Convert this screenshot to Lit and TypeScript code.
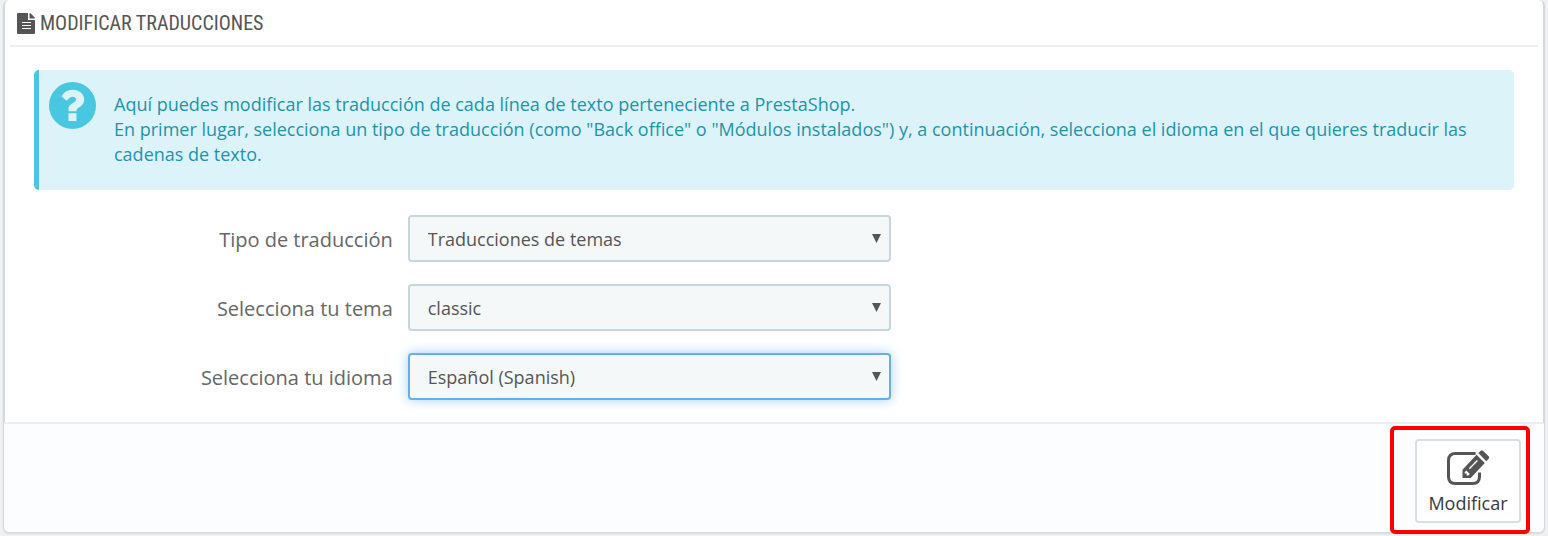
import { LitElement, html, css } from "lit";
import { customElement, state } from "lit/decorators.js";

interface Field {
  id: string;
  label: string;
  options: string[];
}

const FIELDS: Field[] = [
  { id: "type", label: "Tipo de traducción", options: ["Traducciones de temas", "Back office", "Módulos instalados"] },
  { id: "theme", label: "Selecciona tu tema", options: ["classic"] },
  { id: "language", label: "Selecciona tu idioma", options: ["Español (Spanish)"] },
];

@customElement("app-root")
export class AppRoot extends LitElement {
  @state() private current = "language";

  static styles = css`
    :host {
      display: block;
      box-sizing: border-box;
      min-height: 100vh;
      padding: 0 3px 4px;
      background: #eff1f2;
      color: #555;
      font-family: "Open Sans", sans-serif;
      font-size: 18px;
      line-height: 25px;
    }
    *, *::before, *::after { box-sizing: border-box; }
    .panel {
      border: solid #d3d8db;
      border-width: 0 2px;
      border-radius: 6px;
      background: #fff;
      box-shadow: 0 2px 2px rgba(0, 0, 0, 0.1);
    }
    .heading {
      display: flex;
      align-items: center;
      gap: 5px;
      height: 47px;
      margin: 0 5px;
      padding: 2px 7px 0;
      border-bottom: 2px solid #eee;
      font-family: "Ubuntu Condensed", "Roboto Condensed", "Liberation Sans Narrow", sans-serif;
      font-size: 20px;
      font-weight: 400;
      text-transform: uppercase;
    }
    .heading svg { width: 18px; height: 21px; }
    .alert {
      display: flex;
      align-items: flex-start;
      gap: 18px;
      margin: 23px 29px 25px;
      padding: 12px 40px 23px 10px;
      border-left: 5px solid #4ac7e0;
      border-radius: 5px;
      background: #dcf3f9;
      color: #1e94ab;
    }
    .alert svg { flex: none; width: 47px; height: 47px; }
    .alert p { margin: 0; padding-top: 10px; }
    .fields {
      display: grid;
      gap: 22px;
      margin: 0 24px 0 23px;
      padding-bottom: 22px;
    }
    .row {
      display: grid;
      grid-template-columns: 3fr 4fr 5fr;
      align-items: center;
    }
    .row label {
      padding: 2px 8px 0;
      color: #666;
      font-size: 20px;
      text-align: right;
    }
    .control { display: grid; align-items: center; padding: 0 7px; }
    .control select, .control svg { grid-area: 1 / 1; }
    .control select {
      appearance: none;
      width: 100%;
      height: 47px;
      padding: 2px 36px 0 18px;
      border: 2px solid #c7d6db;
      border-radius: 4px;
      outline: none;
      background: #f5f8f9;
      color: #555;
      font: inherit;
    }
    .control select.current {
      border-color: #66afe9;
      box-shadow: 0 0 12px rgba(102, 175, 233, 0.6);
    }
    .control svg {
      justify-self: end;
      width: 9px;
      height: 9px;
      margin-right: 10px;
      pointer-events: none;
    }
    .footer {
      display: flex;
      justify-content: flex-end;
      margin: 0 -1px;
      padding: 15px 23px 9px;
      border-top: 2px solid #eee;
      border-radius: 0 0 5px 5px;
      background: #fcfdfe;
    }
    .action { position: relative; }
    .mark {
      position: absolute;
      inset: -13px -9px -11px -25px;
      border: 4px solid #f00;
      border-radius: 5px;
      pointer-events: none;
    }
    .action button {
      display: grid;
      justify-items: center;
      justify-content: center;
      align-content: start;
      width: 106px;
      height: 84px;
      padding: 9px 0 0;
      border: 2px solid #ddd;
      border-radius: 4px;
      background: #fff;
      color: #363a41;
      font: inherit;
    }
    .action svg { width: 44px; height: 36px; margin-bottom: 5px; }
  `;

  render() {
    return html`
      <section class="panel">
        <h3 class="heading">
          <svg viewBox="0 0 18 21" aria-hidden="true">
            <path fill="#555" fill-rule="evenodd" d="M1 0h10v7h7v13q0 1-1 1H1q-1 0-1-1V1q0-1 1-1zM5 9v1h9V9zm0 3v1h9v-1zm0 3v1h9v-1z" />
            <path fill="#555" d="M12.500 0q.8 0 1.300.6l3.600 3.600q.6.600.6 1.300h-5.500z" />
          </svg>
          Modificar traducciones
        </h3>
        <div class="alert">
          <svg viewBox="0 0 47 47" aria-hidden="true">
            <circle cx="23.500" cy="23.500" r="23.500" fill="#4ac7e0" />
            <path fill="#dcf3f9" d="M12.500 14.500C15 9.800 19 7.800 24 7.800C30 7.800 35.300 12 35.300 17.600C35.300 24.500 27.500 25.500 27.500 28.300V29.200H19.500V27C19.500 21.500 27 21 27 17.600C27 15.600 25.500 14.800 23.700 14.800C21 14.800 19.600 16.500 17.700 18.800ZM19.500 31.300h8v7.700h-8z" />
          </svg>
          <p>
            Aquí puedes modificar las traducción de cada línea de texto perteneciente a PrestaShop.<br />
            En primer lugar, selecciona un tipo de traducción (como "Back office" o "Módulos instalados") y, a continuación, selecciona el idioma en el que quieres traducir las cadenas de texto.
          </p>
        </div>
        <form class="fields">
          ${FIELDS.map(
            (f) => html`
              <div class="row">
                <label for=${f.id}>${f.label}</label>
                <div class="control">
                  <select
                    id=${f.id}
                    class=${this.current === f.id ? "current" : ""}
                    @focus=${() => (this.current = f.id)}
                  >
                    ${f.options.map((o) => html`<option>${o}</option>`)}
                  </select>
                  <svg viewBox="0 0 9 9" aria-hidden="true"><path fill="#555" d="M0 0h9L4.500 9z" /></svg>
                </div>
              </div>
            `
          )}
        </form>
        <div class="footer">
          <div class="action">
            <button type="button">
              <svg viewBox="0 0 44 36" aria-hidden="true">
                <path fill="none" stroke="#555" stroke-width="3" d="M29.500 3.500H9.500Q2.500 3.500 2.500 10.500V26.500Q2.500 33.500 9.500 33.500H26.500Q33.500 33.500 33.500 26.500V22.500" />
                <path fill="#555" fill-rule="evenodd" d="M30.500 4.800L38.800 13L24.700 28H16.500V19.800ZM18.700 22.300V23.600H20.700V25.600H22.300L23.800 24.100L20.300 20.600ZM22.800 18.200L23.800 19.200L31.900 11L30.900 10ZM32.300 3.100L34.600.9Q35.900-.3 37.200.9L42.600 6.200Q43.700 7.400 42.600 8.700L40.300 11.200Z" />
              </svg>
              Modificar
            </button>
            <span class="mark"></span>
          </div>
        </div>
      </section>
    `;
  }
}
